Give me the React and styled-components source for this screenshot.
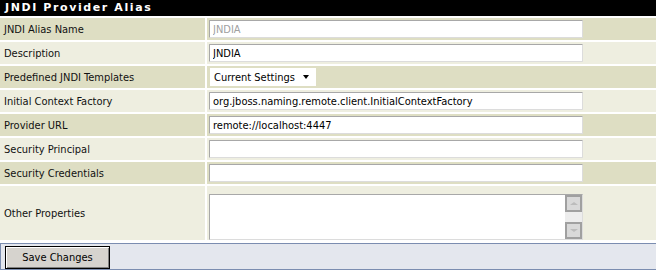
import React from "react";
import styled, { createGlobalStyle } from "styled-components";

const Global = createGlobalStyle`
  html, body { margin: 0; padding: 0; background: #fff; }
  body { width: 656px; font-family: "DejaVu Sans Condensed", "DejaVu Sans", sans-serif; }
`;

const Form = styled.div`
  display: grid;
  grid-template-columns: 205px 1fr;
  column-gap: 2px;
  row-gap: 2px;
`;

const Header = styled.div`
  grid-column: 1 / -1;
  height: 16px;
  background: #000;
  color: #fff;
  font-family: "DejaVu Sans", sans-serif;
  font-weight: bold;
  font-size: 11px;
  letter-spacing: 1.6px;
  line-height: 16px;
  padding-left: 5px;
`;

const Label = styled.div`
  background: ${(p) => (p.$dark ? "#dedec3" : "#eeeee0")};
  height: ${(p) => p.$h || 22}px;
  display: flex;
  align-items: center;
  padding-left: 4px;
  font-size: 11px;
  color: #111;
`;

const Value = styled.div`
  background: ${(p) => (p.$dark ? "#dedec3" : "#eeeee0")};
  height: ${(p) => p.$h || 22}px;
  display: flex;
  align-items: ${(p) => (p.$top ? "flex-start" : "center")};
  padding-left: 2px;
  padding-top: ${(p) => (p.$top ? "8px" : "0")};
  box-sizing: border-box;
`;

const Input = styled.input`
  width: 374px;
  height: 18px;
  box-sizing: border-box;
  border: 1px solid;
  border-color: #a8a8a8 #dcdcdc #dcdcdc #a8a8a8;
  border-radius: 1px;
  background: #fff;
  padding: 0 3px;
  font-family: "DejaVu Sans Condensed", "DejaVu Sans", sans-serif;
  font-size: 11px;
  color: ${(p) => (p.disabled ? "#a0a0a0" : "#000")};
  outline: none;
  margin: 0;
`;

const Select = styled.div`
  width: 106px;
  height: 18px;
  margin-left: 1px;
  background: #fff;
  display: flex;
  align-items: center;
  justify-content: space-between;
  padding: 0 7px 0 4px;
  box-sizing: border-box;
  font-size: 11px;
  color: #000;
`;

const Caret = styled.span`
  width: 0;
  height: 0;
  border-left: 3.5px solid transparent;
  border-right: 3.5px solid transparent;
  border-top: 4px solid #000;
`;

const AreaBox = styled.div`
  width: 372px;
  height: 44px;
  display: flex;
  border: 1px solid;
  border-color: #a8a8a8 #dcdcdc #dcdcdc #a8a8a8;
  background: #fff;
`;

const Area = styled.textarea`
  flex: 1;
  border: none;
  resize: none;
  outline: none;
  margin: 0;
  padding: 2px;
  overflow: hidden;
  font-family: "DejaVu Sans Condensed", "DejaVu Sans", sans-serif;
  font-size: 11px;
`;

const ScrollBar = styled.div`
  width: 17px;
  background: #ededed;
  display: flex;
  flex-direction: column;
  justify-content: space-between;
`;

const ScrollBtn = styled.div`
  width: 17px;
  height: 17px;
  box-sizing: border-box;
  border: 2px solid #a0a0a0;
  background: #d9d9d9;
  display: flex;
  align-items: center;
  justify-content: center;
`;

const Arrow = styled.span`
  width: 0;
  height: 0;
  border-left: 4px solid transparent;
  border-right: 4px solid transparent;
  ${(p) =>
    p.$up
      ? "border-bottom: 3px solid #bcbcbc;"
      : "border-top: 3px solid #bcbcbc;"}
`;

const ButtonBar = styled.div`
  margin-top: 3px;
  height: 27px;
  box-sizing: border-box;
  background: #e4e7ee;
  border-top: 1px solid #7b8db0;
  border-bottom: 1px solid #7b8db0;
  border-left: 1px solid #7b8db0;
  display: flex;
  align-items: center;
  padding-left: 4px;
`;

const Button = styled.button`
  width: 105px;
  height: 23px;
  margin-top: 1px;
  box-sizing: border-box;
  border: 1px solid #000;
  background: #d6d3ce;
  box-shadow: inset 1px 1px 0 #fff, inset -1px -1px 0 #808080;
  font-family: "DejaVu Sans Condensed", "DejaVu Sans", sans-serif;
  font-size: 11px;
  color: #000;
  padding: 0;
`;

const rows = [
  { label: "JNDI Alias Name", value: "JNDIA", disabled: true },
  { label: "Description", value: "JNDIA" },
  { label: "Predefined JNDI Templates", select: "Current Settings" },
  { label: "Initial Context Factory", value: "org.jboss.naming.remote.client.InitialContextFactory" },
  { label: "Provider URL", value: "remote://localhost:4447" },
  { label: "Security Principal", value: "" },
  { label: "Security Credentials", value: "" },
];

export default function App() {
  return (
    <>
      <Global />
      <Form>
        <Header>JNDI Provider Alias</Header>
        {rows.map((r, i) => {
          const dark = i % 2 === 0;
          return (
            <React.Fragment key={r.label}>
              <Label $dark={dark}>{r.label}</Label>
              <Value $dark={dark}>
                {r.select ? (
                  <Select>
                    <span>{r.select}</span>
                    <Caret />
                  </Select>
                ) : (
                  <Input defaultValue={r.value} disabled={r.disabled} readOnly />
                )}
              </Value>
            </React.Fragment>
          );
        })}
        <Label $h={54}>Other Properties</Label>
        <Value $h={54} $top>
          <AreaBox>
            <Area />
            <ScrollBar>
              <ScrollBtn><Arrow $up /></ScrollBtn>
              <ScrollBtn><Arrow /></ScrollBtn>
            </ScrollBar>
          </AreaBox>
        </Value>
      </Form>
      <ButtonBar>
        <Button>Save Changes</Button>
      </ButtonBar>
    </>
  );
}
